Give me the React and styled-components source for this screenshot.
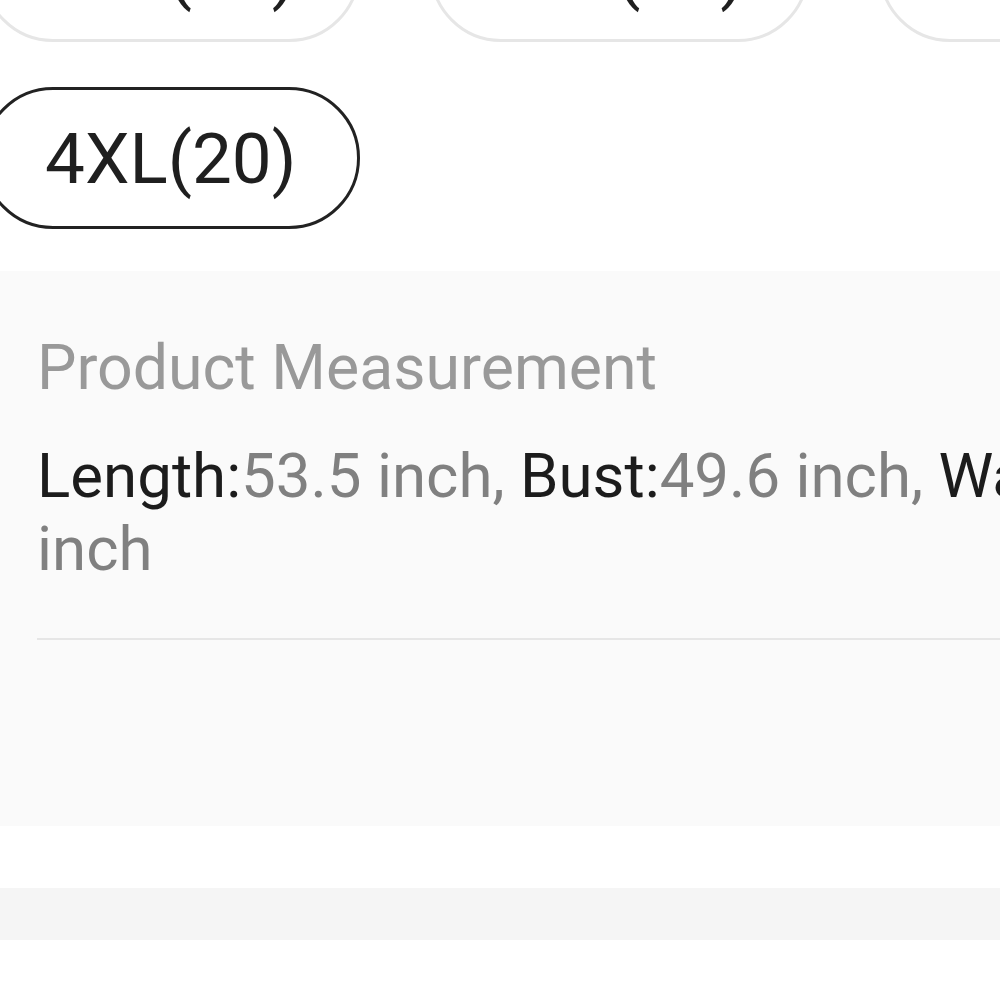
import React from "react";
import styled, { createGlobalStyle } from "styled-components";

const Global = createGlobalStyle`
  html, body { margin: 0; padding: 0; background: #ffffff; overflow: hidden; }
  body { font-family: Roboto, "Liberation Sans", Arial, sans-serif; }
`;

const Page = styled.div`
  width: 1400px;
  margin-left: -20px;
  margin-top: -100px;
  display: flex;
  flex-direction: column;
`;

const SizeList = styled.div`
  display: flex;
  flex-wrap: wrap;
  column-gap: 70px;
  row-gap: 45px;
  padding-left: 2px;
  width: 1360px;
`;

const SizePill = styled.button`
  box-sizing: border-box;
  height: 142px;
  padding: 0 61px 0 60px;
  border-radius: 71px;
  border: 3px solid ${(p) => (p.$active ? "#222222" : "#e6e6e6")};
  background: #ffffff;
  color: #1f1f1f;
  font-family: Roboto, "Liberation Sans", Arial, sans-serif;
  font-size: 71px;
  line-height: 1;
  display: flex;
  align-items: center;
  white-space: nowrap;
`;

const Panel = styled.section`
  margin-top: 42px;
  background: #fafafa;
  padding: 60px 0 186px 57px;
  display: flex;
  flex-direction: column;
`;

const Title = styled.h3`
  margin: 0;
  font-size: 62.6px;
  line-height: 73px;
  font-weight: 400;
  color: #999999;
`;

const Measures = styled.p`
  margin: 36px 0 0;
  font-size: 61.8px;
  line-height: 73px;
  width: 1280px;
`;

const Label = styled.span`
  color: #1c1c1c;
`;

const Value = styled.span`
  color: #808080;
`;

const Divider = styled.hr`
  margin: 52px 0 0;
  border: 0;
  height: 2px;
  background: #e6e6e6;
`;

const Gap = styled.div`
  height: 62px;
  background: #ffffff;
`;

const Band = styled.div`
  height: 52px;
  background: #f5f5f5;
`;

const sizes = [
  { label: "1XL(16)" },
  { label: "2XL(18)" },
  { label: "3XL(19)" },
  { label: "4XL(20)", active: true },
];

const measures = [
  ["Length:", "53.5 inch"],
  ["Bust:", "49.6 inch"],
  ["Waist:", "46.5 inch"],
];

export default function App() {
  return (
    <>
      <Global />
      <Page>
        <SizeList>
          {sizes.map((s) => (
            <SizePill key={s.label} $active={s.active}>
              {s.label}
            </SizePill>
          ))}
        </SizeList>
        <Panel>
          <Title>Product Measurement</Title>
          <Measures>
            {measures.map(([l, v], i) => (
              <React.Fragment key={l}>
                <Label>{l}</Label>
                <Value>
                  {v}
                  {i < measures.length - 1 ? ", " : ""}
                </Value>
              </React.Fragment>
            ))}
          </Measures>
          <Divider />
        </Panel>
        <Gap />
        <Band />
      </Page>
    </>
  );
}
